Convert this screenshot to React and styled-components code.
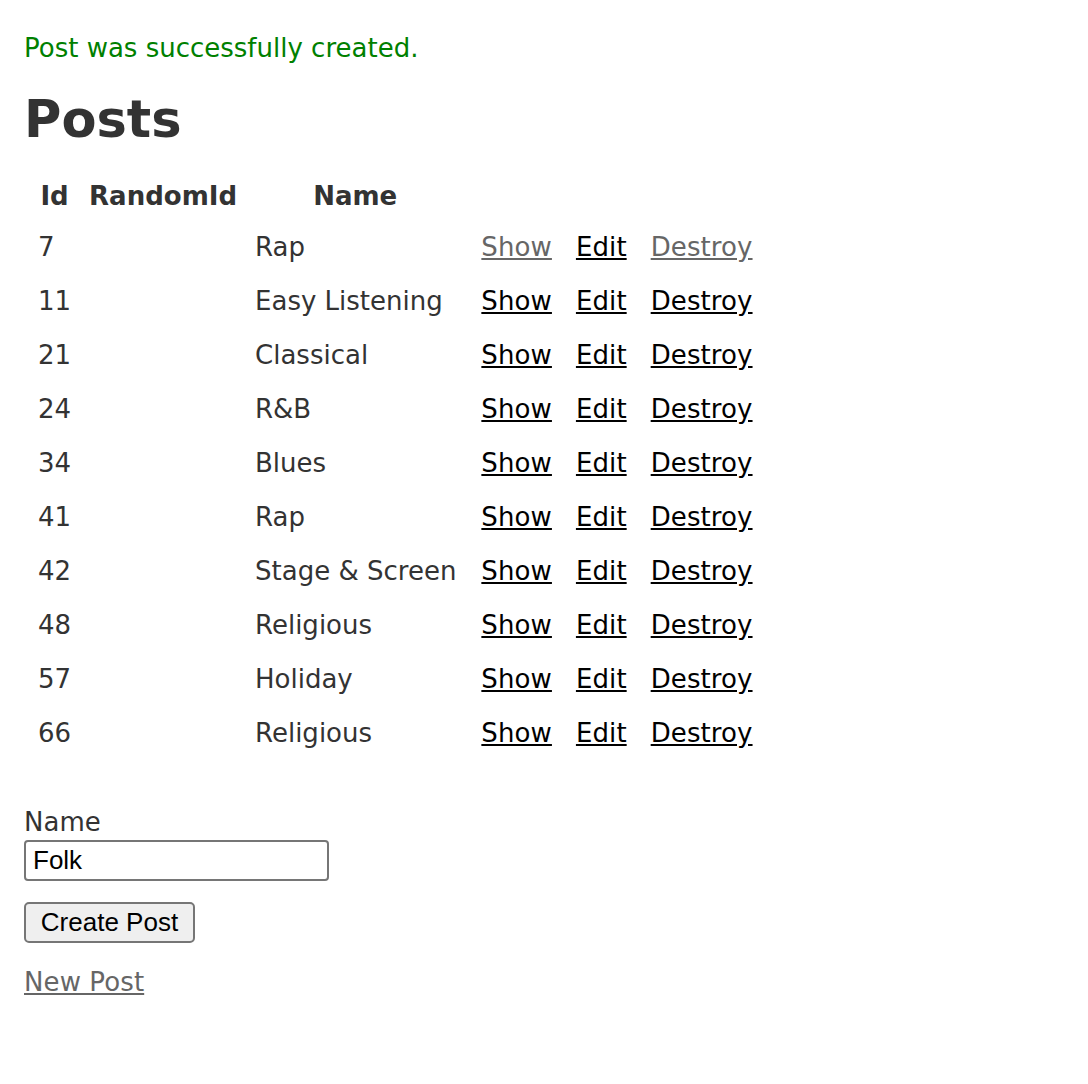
import styled, { createGlobalStyle } from "styled-components";

const posts = [
    { id: 7, name: "Rap", visited: true },
    { id: 11, name: "Easy Listening" },
    { id: 21, name: "Classical" },
    { id: 24, name: "R&B" },
    { id: 34, name: "Blues" },
    { id: 41, name: "Rap" },
    { id: 42, name: "Stage & Screen" },
    { id: 48, name: "Religious" },
    { id: 57, name: "Holiday" },
    { id: 66, name: "Religious" },
];

const App = () => {
    return (
        <Page>
            <GlobalStyle />

            {/* Flash notice */}
            <Notice>Post was successfully created.</Notice>

            <Title>Posts</Title>

            {/* Posts table */}
            <PostsTable>
                <thead>
                    <tr>
                        <HeadCell>Id</HeadCell>
                        <HeadCell>RandomId</HeadCell>
                        <HeadCell wide>Name</HeadCell>
                        <HeadCell colSpan={3}></HeadCell>
                    </tr>
                </thead>
                <tbody>
                    {posts.map((post) => (
                        <tr key={post.id}>
                            <Cell>{post.id}</Cell>
                            <Cell></Cell>
                            <Cell wide>{post.name}</Cell>
                            <Cell action><Link href="#" visited={post.visited}>Show</Link></Cell>
                            <Cell action><Link href="#">Edit</Link></Cell>
                            <Cell action><Link href="#" visited={post.visited}>Destroy</Link></Cell>
                        </tr>
                    ))}
                </tbody>
            </PostsTable>

            {/* New post form */}
            <Form onSubmit={(e) => e.preventDefault()}>
                <Label htmlFor="post_name">Name</Label>
                <Input id="post_name" type="text" defaultValue="Folk" />
                <Button type="submit">Create Post</Button>
            </Form>

            <Link href="#" visited>New Post</Link>
        </Page>
    );
}

export default App;

// Styled Components
const GlobalStyle = createGlobalStyle`
    body {
        margin: 0;
        background: #fff;
        color: #333;
        font-family: "DejaVu Sans", Verdana, sans-serif;
        font-size: 26px;
    }
`

const Page = styled.div`
    padding: 32px 24px 40px;
    display: flex;
    flex-direction: column;
    align-items: flex-start;
`

const Notice = styled.p`
    margin: 0;
    color: green;
    line-height: 32px;
`

const Title = styled.h1`
    margin: 26px 0 0;
    font-size: 51px;
    line-height: 60px;
    font-weight: 700;
    color: #333;
`

const PostsTable = styled.table`
    margin: 21px 0 0 5px;
    border-collapse: collapse;
    border-spacing: 0;
`

const HeadCell = styled.th`
    padding: 10px ${(props) => (props.wide ? "14px" : "9px")} 8px 9px;
    line-height: 30px;
    font-weight: 700;
    text-align: center;
`

const Cell = styled.td`
    padding: 13px ${(props) => (props.action ? "12px" : props.wide ? "13px" : "9px")} 11px
        ${(props) => (props.action ? "12px" : "9px")};
    line-height: 30px;
    text-align: left;
    white-space: nowrap;
`

const Link = styled.a`
    color: ${(props) => (props.visited ? "#666" : "#000")};
    text-decoration: underline;
    line-height: 30px;
    letter-spacing: 0.1px;
`

const Form = styled.form`
    margin-top: 48px;
    display: flex;
    flex-direction: column;
    align-items: flex-start;
`

const Label = styled.label`
    line-height: 30px;
`

const Input = styled.input`
    margin-top: 3px;
    box-sizing: border-box;
    width: 305px;
    height: 41px;
    padding: 0 7px;
    border: 2px solid #767676;
    border-radius: 4px;
    font-family: "Liberation Sans", Arial, sans-serif;
    font-size: 26px;
    color: #000;
    background: #fff;
`

const Button = styled.button`
    margin: 21px 0 24px;
    box-sizing: border-box;
    width: 171px;
    height: 41px;
    padding: 0;
    border: 2px solid #767676;
    border-radius: 5px;
    background: #efefef;
    font-family: "Liberation Sans", Arial, sans-serif;
    font-size: 26px;
    color: #000;
`
